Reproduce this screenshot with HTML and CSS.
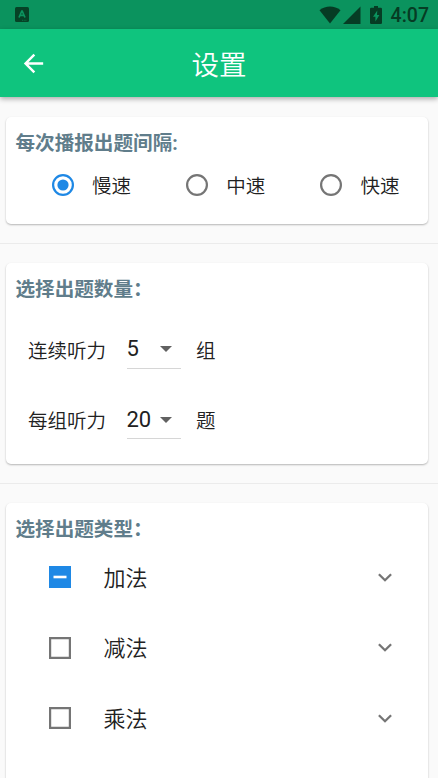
FILE: index.html
```html
<!DOCTYPE html>
<html lang="zh-CN">
<head>
<meta charset="utf-8">
<title>设置</title>
<link rel="stylesheet" href="styles.css">
</head>
<body>
<div class="screen">
  <div class="status-bar">
    <svg class="status-app" width="14" height="15" viewBox="0 0 14 15"><rect width="14" height="15" rx="1.5" fill="#064226"/><path d="M4 10.5 6.8 4h.4L10 10.5M5 8.4h4" fill="none" stroke="#0b935e" stroke-width="1.7"/><path d="M7 13.3h5" stroke="#0b935e" stroke-width="1" stroke-dasharray="1 .7" opacity=".6"/></svg>
    <svg class="wifi" width="22" height="18" viewBox="0 0 22 18"><path d="M.5 4.2C6.5-.8 15.500-.8 21.500 4.200L11 17.500z"/></svg>
    <svg class="signal" width="18" height="18" viewBox="0 0 18 18"><path d="M0 18 17.500.5V18z"/></svg>
    <svg class="battery" width="12" height="18" viewBox="0 0 12 18"><path fill-rule="evenodd" d="M4 0h4v1.800h2.800q1.200 0 1.200 1.200v13.800q0 1.200-1.200 1.200H1.200Q0 18 0 16.800V3q0-1.200 1.200-1.200H4zM7.300 4.500 3 10.700h2.400v4.800L9.400 9H7z"/></svg>
    <span class="clock">4:07</span>
  </div>
  <header class="app-bar">
    <svg class="back" width="29" height="29" viewBox="0 0 24 24"><path d="M20 11H7.830l5.590-5.590L12 4l-8 8 8 8 1.410-1.410L7.830 13H20v-2z" fill="#fff"/></svg>
    <h1>设置</h1>
  </header>
  <main>
    <section class="card interval">
      <h2>每次播报出题间隔:</h2>
      <div class="radios">
        <div class="option"><svg class="radio on" viewBox="0 0 22 22"><circle class="ring" cx="11" cy="11" r="9.900"/><circle class="dot" cx="11" cy="11" r="5.600"/></svg><span>慢速</span></div>
        <div class="option"><svg class="radio" viewBox="0 0 22 22"><circle class="ring" cx="11" cy="11" r="9.900"/></svg><span>中速</span></div>
        <div class="option"><svg class="radio" viewBox="0 0 22 22"><circle class="ring" cx="11" cy="11" r="9.900"/></svg><span>快速</span></div>
      </div>
    </section>
    <div class="divider"></div>
    <section class="card amount">
      <h2>选择出题数量：</h2>
      <div class="field"><span class="label">连续听力</span><div class="select"><span>5</span><svg width="12" height="6" viewBox="0 0 12 6"><path d="M0 0h12L6 6z"/></svg></div><span class="unit">组</span></div>
      <div class="field"><span class="label">每组听力</span><div class="select"><span>20</span><svg width="12" height="6" viewBox="0 0 12 6"><path d="M0 0h12L6 6z"/></svg></div><span class="unit">题</span></div>
    </section>
    <div class="divider"></div>
    <section class="card types">
      <h2>选择出题类型：</h2>
      <div class="type"><svg class="check" viewBox="0 0 22 22"><path d="M0 0h22v22H0z" fill="#1e88e5"/><path d="M4.500 11h13" stroke="#fff" stroke-width="2.600"/></svg><span>加法</span><svg class="chevron" viewBox="0 0 14 9"><path d="m.9 1.200 6.100 6 6.100-6"/></svg></div>
      <div class="type"><svg class="check" viewBox="0 0 22 22"><path class="box" d="M1.100 1.100h19.800v19.800H1.100z"/></svg><span>减法</span><svg class="chevron" viewBox="0 0 14 9"><path d="m.9 1.200 6.100 6 6.100-6"/></svg></div>
      <div class="type"><svg class="check" viewBox="0 0 22 22"><path class="box" d="M1.100 1.100h19.800v19.800H1.100z"/></svg><span>乘法</span><svg class="chevron" viewBox="0 0 14 9"><path d="m.9 1.200 6.100 6 6.100-6"/></svg></div>
    </section>
  </main>
</div>
</body>
</html>
```
FILE: styles.css
```css
* { box-sizing: border-box; }
body { margin: 0; background: #fafafa; }
svg { display: block; flex: none; }
.screen {
  width: 438px;
  height: 778px;
  overflow: hidden;
  display: flex;
  flex-direction: column;
  font: 350 19.5px/28px Roboto, "Noto Sans CJK SC", sans-serif;
  color: #212121;
}
.status-bar {
  flex: none;
  height: 29px;
  display: flex;
  align-items: center;
  padding: 0 9px 0 15px;
  background: #0b935e;
  fill: #063c24;
  color: #063c24;
}
.wifi { margin-left: auto; }
.signal { margin-left: 2px; }
.battery { margin-left: 9px; }
.clock { margin-left: 9px; font-size: 19.5px; font-weight: 500; padding-top: 2px; }
.app-bar {
  flex: none;
  height: 68px;
  display: grid;
  grid-template-columns: 68px 1fr 68px;
  align-items: center;
  background: #0fc47e;
  box-shadow: 0 2px 5px rgba(0, 0, 0, .32);
}
.back { margin-left: 19px; }
h1 { margin: 0; padding-top: 6px; text-align: center; color: #fff; font-size: 27.5px; line-height: 40px; font-weight: 350; }
main { flex: none; padding-top: 20px; }
.card {
  width: 422px;
  margin-left: 6px;
  padding-left: 9.5px;
  background: #fff;
  border-radius: 5px;
  box-shadow: 0 1px 2px rgba(0, 0, 0, .28);
}
h2 { margin: 0; height: 50px; line-height: 54px; font-size: 19.6px; font-weight: 700; color: #607d8b; }
.divider { height: 1px; margin: 19px 0; background: #ebebeb; }
.interval { height: 107px; }
.radios { display: flex; padding-left: 36px; }
.option { flex: none; width: 134.3px; height: 36px; display: flex; align-items: center; gap: 18.5px; }
.option:last-child { width: auto; }
.option span { padding-top: 4px; }
.radio { width: 22px; height: 22px; }
.ring { fill: none; stroke: #757575; stroke-width: 2.2; }
.on .ring { stroke: #1e88e5; }
.dot { fill: #1e88e5; }
.amount { height: 201px; }
.field { height: 70.5px; display: flex; align-items: center; padding: 1px 0 0 12.5px; }
.label { width: 98.5px; padding-top: 6px; }
.unit { padding-top: 6px; }
.select {
  width: 54.5px;
  height: 40px;
  margin-right: 15px;
  padding: 2px 9px 0 0;
  display: flex;
  align-items: center;
  justify-content: space-between;
  border-bottom: 1px solid #d6d6d6;
  font-size: 22px;
  font-weight: 400;
  fill: #616161;
}
.types { height: 320px; }
.type { height: 70.5px; display: flex; align-items: center; padding: 0 36.5px 0 33px; font-size: 22px; }
.type span { padding-top: 3px; }
.types h2 { margin-bottom: -11px; }
.check { width: 22px; height: 22px; margin-right: 33px; }
.box { fill: none; stroke: #757575; stroke-width: 2.2; }
.chevron { width: 14px; height: 9px; margin-left: auto; fill: none; stroke: #757575; stroke-width: 2.3; }
```
